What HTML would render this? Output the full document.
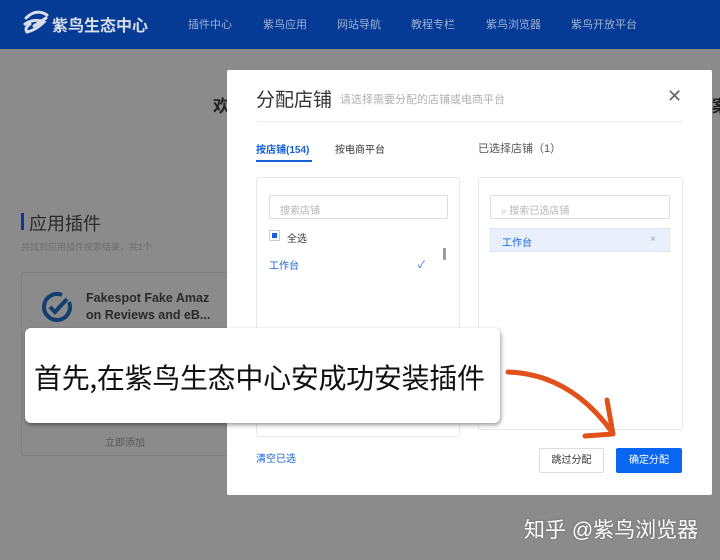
<!DOCTYPE html>
<html><head><meta charset="utf-8"><style>
*{margin:0;padding:0;box-sizing:border-box}
body{width:720px;height:560px;overflow:hidden;position:relative;background:#8b8b8b;font-family:"Liberation Sans","Noto Sans CJK SC",sans-serif}
.hdr{position:absolute;left:0;top:0;width:720px;height:49px;background:#053a95}
.hdr .logo{position:absolute;left:40px;top:12px;color:#d8deea;font-size:16px;font-weight:bold}
.hdr .nav{position:absolute;top:16px;font-size:11px;color:#9fb0d3}
.ab{position:absolute}
.modal{position:absolute;left:227px;top:70px;width:485px;height:425px;background:#fff;border-radius:2px}
.box{position:absolute;border:1px solid #e8e8e8;border-radius:3px}
.inp{position:absolute;border:1px solid #dcdcdc;border-radius:2px;font-size:10px;color:#b5b5b5;padding:6px 10px}
</style></head><body>
<div class="hdr">
 <svg class="ab" style="left:22px;top:10px" width="28" height="26" viewBox="0 0 28 26"><path d="M4 8 Q14 -2 25 5 M3 14 Q12 8 22 12 Q14 20 5 22 Q2 18 8 14 M12 16 L24 8" fill="none" stroke="#d8deea" stroke-width="3" stroke-linecap="round"/></svg>
 <div class="logo" style="left:52px">紫鸟生态中心</div>
 <div class="nav" style="left:188px">插件中心</div>
 <div class="nav" style="left:263px">紫鸟应用</div>
 <div class="nav" style="left:337px">网站导航</div>
 <div class="nav" style="left:411px">教程专栏</div>
 <div class="nav" style="left:486px">紫鸟浏览器</div>
 <div class="nav" style="left:571px">紫鸟开放平台</div>
</div>
<div class="ab" style="left:213px;top:92px;font-size:17px;font-weight:bold;color:#222">欢</div>
<div class="ab" style="left:712px;top:92px;font-size:17px;font-weight:bold;color:#222">案</div>
<div class="ab" style="left:21px;top:213px;width:3px;height:17px;background:#0a3a96"></div>
<div class="ab" style="left:29px;top:210px;font-size:18px;color:#2a2a2a">应用插件</div>
<div class="ab" style="left:21px;top:240px;font-size:9px;color:#6e6e6e">共找到应用插件搜索结果，共1个</div>
<div class="ab" style="left:21px;top:272px;width:215px;height:184px;border:1px solid #808080;border-radius:3px"></div>
<svg class="ab" style="left:40px;top:290px" width="34" height="34" viewBox="0 0 34 34"><path d="M29 12 A13 13 0 1 1 22 5" fill="none" stroke="#123e70" stroke-width="4"/><path d="M10 17 L15 22 L27 9" fill="none" stroke="#123e70" stroke-width="4"/></svg>
<div class="ab" style="left:86px;top:290px;font-size:12.5px;font-weight:bold;color:#2a2a2a;line-height:17px">Fakespot Fake Amaz<br>on Reviews and eB...</div>
<div class="ab" style="left:105px;top:434px;font-size:10px;color:#5a5a5a">立即添加</div>
<div class="modal">
 <div class="ab" style="left:29px;top:15px;font-size:19px;color:#333">分配店铺</div>
 <div class="ab" style="left:113px;top:21px;font-size:11px;color:#b0b0b0">请选择需要分配的店铺或电商平台</div>
 <div class="ab" style="left:440px;top:16px;font-size:18px;color:#666">✕</div>
 <div class="ab" style="left:30px;top:51px;width:425px;height:1px;background:#ececec"></div>
 <div class="ab" style="left:29px;top:71px;font-size:10px;color:#1660d8;font-weight:bold">按店铺(154)</div>
 <div class="ab" style="left:29px;top:90px;width:56px;height:2px;background:#1660d8"></div>
 <div class="ab" style="left:108px;top:71px;font-size:10px;color:#333">按电商平台</div>
 <div class="ab" style="left:251px;top:70px;font-size:11px;color:#555">已选择店铺（1）</div>
 <div class="box" style="left:29px;top:107px;width:204px;height:260px"></div>
 <div class="inp" style="left:42px;top:125px;width:179px;height:24px">搜索店铺</div>
 <div class="ab" style="left:42px;top:160px;width:11px;height:11px;border:1px solid #ccc;background:#fff"><div style="margin:2px;width:5px;height:5px;background:#1660d8"></div></div>
 <div class="ab" style="left:60px;top:160px;font-size:10px;color:#333">全选</div>
 <div class="ab" style="left:42px;top:187px;font-size:10px;color:#1660d8">工作台</div>
 <div class="ab" style="left:191px;top:186px;font-size:10px;color:#1660d8">✓</div>
 <div class="ab" style="left:216px;top:178px;width:3px;height:12px;background:#999;border-radius:1px"></div>
 <div class="box" style="left:251px;top:107px;width:205px;height:253px"></div>
 <div class="inp" style="left:263px;top:125px;width:180px;height:24px">&#x2315; 搜索已选店铺</div>
 <div class="ab" style="left:263px;top:158px;width:180px;height:24px;background:#eaf0fb;border:1px solid #dbe4f5"></div>
 <div class="ab" style="left:275px;top:164px;font-size:10px;color:#1660d8">工作台</div>
 <div class="ab" style="left:423px;top:164px;font-size:10px;color:#8aa6d8">×</div>
 <div class="ab" style="left:29px;top:380px;font-size:10px;color:#1660d8">清空已选</div>
 <div class="ab" style="left:312px;top:378px;width:65px;height:25px;border:1px solid #ddd;border-radius:2px;font-size:10px;color:#333;text-align:center;line-height:23px">跳过分配</div>
 <div class="ab" style="left:389px;top:378px;width:66px;height:25px;background:#0a66f0;border-radius:2px;font-size:10px;color:#fff;text-align:center;line-height:25px">确定分配</div>
</div>
<div class="ab" style="left:25px;top:328px;width:475px;height:95px;background:#fff;border-radius:6px;box-shadow:1px 2px 4px rgba(0,0,0,.4)"></div>
<div class="ab" style="left:34px;top:358px;font-size:28px;color:#111;font-family:'Noto Sans CJK SC',sans-serif;line-height:38px;letter-spacing:-0.3px">首先,在紫鸟生态中心安成功安装插件</div>
<svg class="ab" style="left:500px;top:360px" width="120" height="85" viewBox="0 0 120 85"><path d="M8 12 Q70 14 112 72" fill="none" stroke="#e0521a" stroke-width="5" stroke-linecap="round"/><path d="M107 40 L113 74 L85 76" fill="none" stroke="#e0521a" stroke-width="5" stroke-linecap="round" stroke-linejoin="round"/></svg>
<div class="ab" style="left:524px;top:514px;font-size:21px;color:#fff;text-shadow:0 0 2px rgba(0,0,0,.3)">知乎 @紫鸟浏览器</div>
</body></html>
